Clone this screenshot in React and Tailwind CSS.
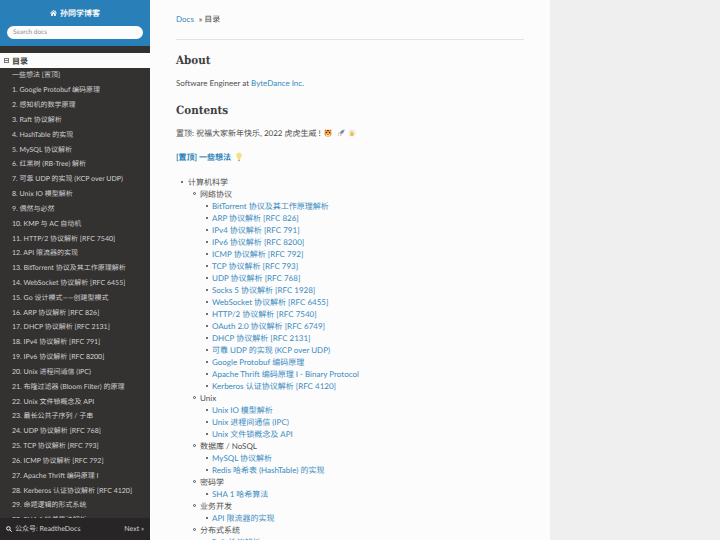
import React from 'react';

const tocItems = [
  '一些想法 [置顶]', '1. Google Protobuf 编码原理', '2. 感知机的数学原理', '3. Raft 协议解析', '4. HashTable 的实现',
  '5. MySQL 协议解析', '6. 红黑树 (RB-Tree) 解析', '7. 可靠 UDP 的实现 (KCP over UDP)', '8. Unix IO 模型解析', '9. 偶然与必然',
  '10. KMP 与 AC 自动机', '11. HTTP/2 协议解析 [RFC 7540]', '12. API 限流器的实现', '13. BitTorrent 协议及其工作原理解析',
  '14. WebSocket 协议解析 [RFC 6455]', '15. Go 设计模式——创建型模式', '16. ARP 协议解析 [RFC 826]', '17. DHCP 协议解析 [RFC 2131]',
  '18. IPv4 协议解析 [RFC 791]', '19. IPv6 协议解析 [RFC 8200]', '20. Unix 进程间通信 (IPC)', '21. 布隆过滤器 (Bloom Filter) 的原理',
  '22. Unix 文件锁概念及 API', '23. 最长公共子序列 / 子串', '24. UDP 协议解析 [RFC 768]', '25. TCP 协议解析 [RFC 793]',
  '26. ICMP 协议解析 [RFC 792]', '27. Apache Thrift 编码原理 I', '28. Kerberos 认证协议解析 [RFC 4120]', '29. 命题逻辑的形式系统', '30. SHA 1 哈希算法解析',
];

const contents = [
  {
    title: '网络协议',
    links: ['BitTorrent 协议及其工作原理解析', 'ARP 协议解析 [RFC 826]', 'IPv4 协议解析 [RFC 791]', 'IPv6 协议解析 [RFC 8200]', 'ICMP 协议解析 [RFC 792]', 'TCP 协议解析 [RFC 793]', 'UDP 协议解析 [RFC 768]', 'Socks 5 协议解析 [RFC 1928]', 'WebSocket 协议解析 [RFC 6455]', 'HTTP/2 协议解析 [RFC 7540]', 'OAuth 2.0 协议解析 [RFC 6749]', 'DHCP 协议解析 [RFC 2131]', '可靠 UDP 的实现 (KCP over UDP)', 'Google Protobuf 编码原理', 'Apache Thrift 编码原理 I - Binary Protocol', 'Kerberos 认证协议解析 [RFC 4120]'],
  },
  { title: 'Unix', links: ['Unix IO 模型解析', 'Unix 进程间通信 (IPC)', 'Unix 文件锁概念及 API'] },
  { title: '数据库 / NoSQL', links: ['MySQL 协议解析', 'Redis 哈希表 (HashTable) 的实现'] },
  { title: '密码学', links: ['SHA 1 哈希算法'] },
  { title: '业务开发', links: ['API 限流器的实现'] },
  { title: '分布式系统', links: ['Raft 协议解析'] },
];

const Tiger = () => (
  <svg viewBox="0 0 10 10" className="ml-[1px] inline-block h-[8px] w-[8px]">
    <circle cx="2" cy="2" r="1.4" fill="#e8802a" />
    <circle cx="8" cy="2" r="1.4" fill="#e8802a" />
    <circle cx="5" cy="5.3" r="4.4" fill="#f0922f" />
    <ellipse cx="5" cy="7.4" rx="2.6" ry="2" fill="#f6dfb8" />
    <rect x="2.3" y="3.8" width="1.4" height="1.4" fill="#3a2a20" />
    <rect x="6.3" y="3.8" width="1.4" height="1.4" fill="#3a2a20" />
    <path d="M4 1.4h2v1H4zM4.4 6.4h1.2v1H4.4z" fill="#3a2a20" />
  </svg>
);

const Rocket = () => (
  <svg viewBox="0 0 10 10" className="ml-[5px] inline-block h-[8px] w-[8px]">
    <path d="M9.5.5C7 .6 4.6 2 3.3 4.6l2.1 2.1C8 5.4 9.4 3 9.5.5z" fill="#8a9bb5" />
    <circle cx="6.6" cy="3.4" r="1" fill="#3f6fb0" />
    <path d="M3.3 4.6 1.4 5l1.2 1zM5.4 6.7 5 8.6 4 7.4z" fill="#c9443a" />
    <path d="M2.8 7.2 1 9l.4-2.2z" fill="#e8902a" />
  </svg>
);

const Hand = () => (
  <svg viewBox="0 0 10 10" className="ml-[3px] inline-block h-[8px] w-[8px]">
    <circle cx="5" cy="5" r="4.8" fill="#eeeeee" />
    <path d="M3 8.6V5l.6-2 .6 1.4.5-2.4.7 2.4.7-1.8.4 2.6.8-.4-.5 3.2-1 .8z" fill="#f2bd42" />
  </svg>
);

const Bulb = () => (
  <svg viewBox="0 0 10 12" className="ml-[2px] inline-block h-[10px] w-[8px]">
    <path d="M5 .5a3.6 3.6 0 0 0-2.2 6.4c.6.5.7 1.2.7 1.8h3c0-.6.1-1.3.7-1.8A3.6 3.6 0 0 0 5 .5z" fill="#f5e27a" />
    <rect x="3.6" y="9" width="2.8" height="2.2" rx=".6" fill="#a9b4bd" />
  </svg>
);

export default function App() {
  return (
    <div className="relative flex h-[540px] w-[720px] overflow-hidden bg-[#efefef] font-['Lato','Noto_Sans_CJK_SC',sans-serif] text-[8px] leading-[12px] text-[#505050] [text-rendering:geometricPrecision]">
      {/* Sidebar */}
      <nav className="relative flex h-full w-[150px] shrink-0 flex-col overflow-hidden bg-[#343131]">
        <div className="h-[46px] shrink-0 bg-[#2980b9] px-[7px] pt-[6px] text-center">
          <div className="flex h-[13px] items-center justify-center gap-[3px] text-[8px] font-bold text-[#fcfcfc]">
            <svg viewBox="0 0 12 10" className="h-[6px] w-[7px] fill-current">
              <path d="M6 0 0 5l.7.8L6 1.4l5.3 4.4.7-.8-2-1.7V1H8.700v1.200zM2 6v4h3V7.300h2V10h3V6L6 2.700z" />
            </svg>
            孙同学博客
          </div>
          <div className="mt-[7px] flex h-[13px] items-center rounded-full bg-[#fcfcfc] pl-[6px] text-[6.500px] text-[#8f8f8f]">Search docs</div>
        </div>
        <div className="mt-[7px] flex h-[15px] shrink-0 items-center bg-[#fcfcfc] pl-[4px] font-bold text-[#404040]">
          <span className="mr-[3px] flex h-[5px] w-[5px] items-center justify-center border border-[#777]">
            <span className="h-px w-[3px] bg-[#777]" />
          </span>
          目录
        </div>
        <ul>
          {tocItems.map((item) => (
            <li key={item} className="flex h-[14.830px] items-center whitespace-nowrap pl-[12px] text-[7px] text-[#d0d0d0]">{item}</li>
          ))}
        </ul>
        <div className="absolute bottom-0 left-0 flex h-[22px] w-full items-center justify-between bg-[#272525] px-[6px] text-[7px] text-[#d0d0d0]">
          <span className="flex items-center gap-[3px]">
            <svg viewBox="0 0 10 10" className="h-[6px] w-[6px] fill-none stroke-[#fcfcfc] stroke-[1.600]">
              <circle cx="4" cy="4" r="3" />
              <path d="m6.200 6.200 3.300 3.300" />
            </svg>
            公众号: ReadtheDocs
          </span>
          <span>Next »</span>
        </div>
      </nav>

      {/* Page */}
      <main className="h-full w-[400px] shrink-0 overflow-hidden bg-[#fcfcfc] px-[26px]">
        <div className="flex h-[40px] items-end border-b border-[#e1e4e5] pb-[14px]">
          <a className="text-[#3a8bc0]">Docs</a>
          <span className="ml-[5px]">»</span>
          <span className="ml-[2px]">目录</span>
        </div>
        <h1 className="mt-[13px] font-['DejaVu_Serif_Condensed','DejaVu_Serif',serif] text-[11.500px] font-bold leading-[14px] text-[#404040]">About</h1>
        <p className="mt-[10px]">Software Engineer at <a className="text-[#3a8bc0]">ByteDance Inc.</a></p>
        <h1 className="mt-[14px] font-['DejaVu_Serif_Condensed','DejaVu_Serif',serif] text-[11.500px] font-bold leading-[14px] text-[#404040]">Contents</h1>
        <p className="mt-[10px] flex h-[12px] items-center whitespace-pre">置顶: 祝福大家新年快乐, 2022 虎虎生威 ! <Tiger /><Rocket /><Hand /></p>
        <p className="mt-[12px] flex h-[12px] items-center whitespace-pre font-bold text-[#2980b9]">[置顶] 一些想法 <Bulb /></p>
        <ul className="mt-[13px] pl-[12px]">
          <li className="relative before:absolute before:left-[-7px] before:top-[5px] before:h-[2px] before:w-[2px] before:rounded-full before:bg-[#404040]">
            计算机科学
            <ul className="pl-[12px]">
              {contents.map((group) => (
                <li key={group.title} className="relative before:absolute before:left-[-7px] before:top-[4px] before:h-[3px] before:w-[3px] before:rounded-full before:border-[0.5px] before:border-[#505050]">
                  {group.title}
                  <ul className="pl-[12px]">
                    {group.links.map((link) => (
                      <li key={link} className="relative text-[#3a8bc0] before:absolute before:left-[-6px] before:top-[5px] before:h-[2px] before:w-[2px] before:rounded-full before:bg-[#404040]">{link}</li>
                    ))}
                  </ul>
                </li>
              ))}
            </ul>
          </li>
        </ul>
      </main>
    </div>
  );
}
